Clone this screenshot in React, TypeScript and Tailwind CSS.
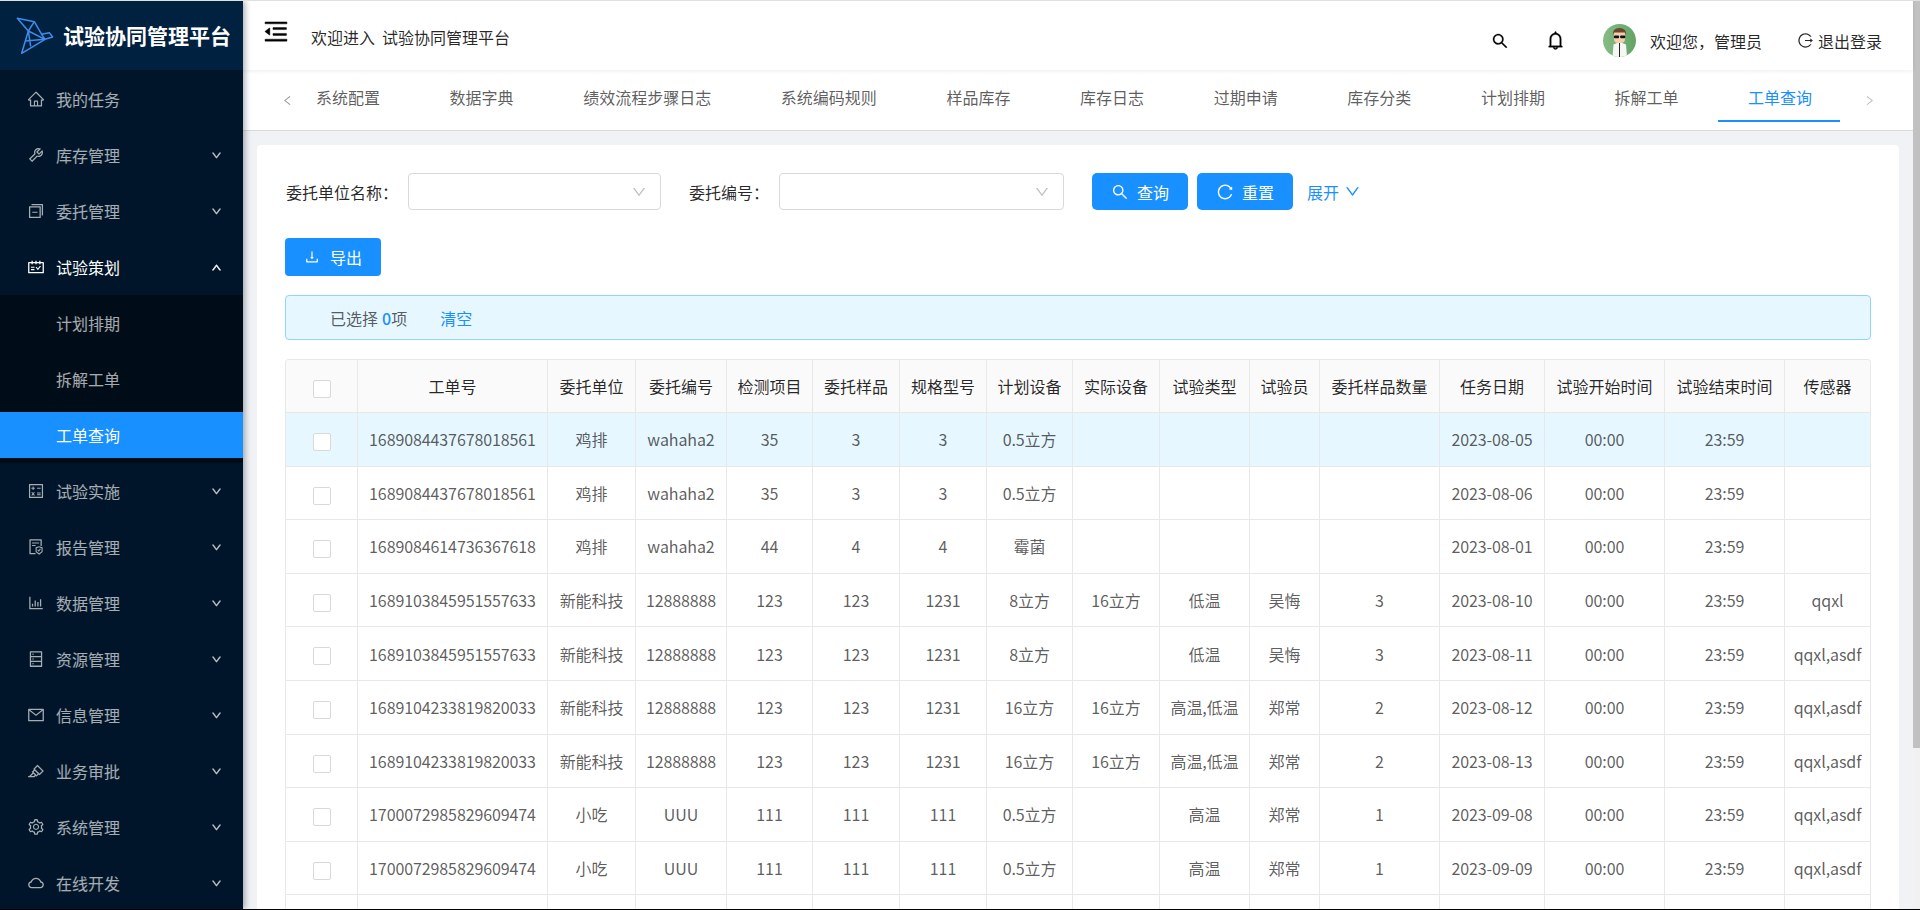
import React from "react";
import {
  AiOutlineHome,
  AiOutlineTool,
  AiOutlineSwitcher,
  AiOutlineSchedule,
  AiOutlineCalculator,
  AiOutlineFileProtect,
  AiOutlineBarChart,
  AiOutlineDatabase,
  AiOutlineMail,
  AiOutlineHighlight,
  AiOutlineSetting,
  AiOutlineCloud,
  AiOutlineSearch,
  AiOutlineBell,
  AiOutlineLogout,
  AiOutlineMenuFold,
  AiOutlineLeft,
  AiOutlineRight,
  AiOutlineDown,
  AiOutlineUp,
  AiOutlineReload,
  AiOutlineDownload,
} from "react-icons/ai";

const menuTop = [
  { label: "我的任务", icon: AiOutlineHome, noArrow: true },
  { label: "库存管理", icon: AiOutlineTool },
  { label: "委托管理", icon: AiOutlineSwitcher },
];

const menuBottom = [
  { label: "试验实施", icon: AiOutlineCalculator },
  { label: "报告管理", icon: AiOutlineFileProtect },
  { label: "数据管理", icon: AiOutlineBarChart },
  { label: "资源管理", icon: AiOutlineDatabase },
  { label: "信息管理", icon: AiOutlineMail },
  { label: "业务审批", icon: AiOutlineHighlight },
  { label: "系统管理", icon: AiOutlineSetting },
  { label: "在线开发", icon: AiOutlineCloud },
];

const tabs = ["系统配置", "数据字典", "绩效流程步骤日志", "系统编码规则", "样品库存", "库存日志", "过期申请", "库存分类", "计划排期", "拆解工单", "工单查询"];

const columns = [
  { title: "工单号", width: "w-[190px]" },
  { title: "委托单位", width: "w-[88px]" },
  { title: "委托编号", width: "w-[91px]" },
  { title: "检测项目", width: "w-[86px]" },
  { title: "委托样品", width: "w-[87px]" },
  { title: "规格型号", width: "w-[87px]" },
  { title: "计划设备", width: "w-[86px]" },
  { title: "实际设备", width: "w-[87px]" },
  { title: "试验类型", width: "w-[90px]" },
  { title: "试验员", width: "w-[70px]" },
  { title: "委托样品数量", width: "w-[120px]" },
  { title: "任务日期", width: "w-[105px]" },
  { title: "试验开始时间", width: "w-[120px]" },
  { title: "试验结束时间", width: "w-[120px]" },
  { title: "传感器", width: "w-[85px]" },
];

const rows = [
  ["1689084437678018561", "鸡排", "wahaha2", "35", "3", "3", "0.5立方", "", "", "", "", "2023-08-05", "00:00", "23:59", ""],
  ["1689084437678018561", "鸡排", "wahaha2", "35", "3", "3", "0.5立方", "", "", "", "", "2023-08-06", "00:00", "23:59", ""],
  ["1689084614736367618", "鸡排", "wahaha2", "44", "4", "4", "霉菌", "", "", "", "", "2023-08-01", "00:00", "23:59", ""],
  ["1689103845951557633", "新能科技", "12888888", "123", "123", "1231", "8立方", "16立方", "低温", "吴悔", "3", "2023-08-10", "00:00", "23:59", "qqxl"],
  ["1689103845951557633", "新能科技", "12888888", "123", "123", "1231", "8立方", "", "低温", "吴悔", "3", "2023-08-11", "00:00", "23:59", "qqxl,asdf"],
  ["1689104233819820033", "新能科技", "12888888", "123", "123", "1231", "16立方", "16立方", "高温,低温", "郑常", "2", "2023-08-12", "00:00", "23:59", "qqxl,asdf"],
  ["1689104233819820033", "新能科技", "12888888", "123", "123", "1231", "16立方", "16立方", "高温,低温", "郑常", "2", "2023-08-13", "00:00", "23:59", "qqxl,asdf"],
  ["1700072985829609474", "小吃", "UUU", "111", "111", "111", "0.5立方", "", "高温", "郑常", "1", "2023-09-08", "00:00", "23:59", "qqxl,asdf"],
  ["1700072985829609474", "小吃", "UUU", "111", "111", "111", "0.5立方", "", "高温", "郑常", "1", "2023-09-09", "00:00", "23:59", "qqxl,asdf"],
  ["", "", "", "", "", "", "", "", "", "", "", "", "", "", ""],
];

const Logo = () => (
  <svg width="38" height="38" viewBox="48 58 114 114" fill="none" stroke="#3f8cec" strokeWidth="4.5" strokeLinejoin="round" className="shrink-0">
    <path d="M52 62 L103 72 L125 110 L148 105 L158 118 L135 125 L65 167 L85 100 Z" />
    <path d="M103 72 L85 100 L135 125 M125 110 L135 125 M85 100 L92 146 M76 130 L135 125" />
  </svg>
);

const Avatar = () => (
  <svg width="33" height="33" viewBox="0 0 33 33" className="shrink-0">
    <defs>
      <linearGradient id="avatar-bg" x1="0" y1="0" x2="1" y2="0">
        <stop offset="0" stopColor="#86bc84" />
        <stop offset="1" stopColor="#62a465" />
      </linearGradient>
      <clipPath id="avatar-clip">
        <circle cx="16.5" cy="16.5" r="16.5" />
      </clipPath>
    </defs>
    <g clipPath="url(#avatar-clip)">
      <rect width="33" height="33" fill="url(#avatar-bg)" />
      <path d="M9.5 33 L10.5 20.5 L16.5 18 L23 20.5 L24 33 Z" fill="#f6f7f5" />
      <rect x="16" y="19" width="1" height="14" fill="#222" />
      <rect x="11" y="6" width="11" height="13" rx="4" fill="#f3cdb0" />
      <path d="M9.8 11 Q9.5 4 16.5 4 Q23.5 4 23.2 11 L22 8.5 L11 8.5 Z" fill="#6b4630" />
      <rect x="11" y="11.5" width="5" height="2.8" rx="0.8" fill="#111" />
      <rect x="17.2" y="11.5" width="5" height="2.8" rx="0.8" fill="#111" />
    </g>
  </svg>
);

const MenuRow = ({ label, Icon, open, noArrow }: { label: string; Icon: React.ComponentType<{ size?: number }>; open?: boolean; noArrow?: boolean }) => (
  <div className={`flex h-[56px] shrink-0 items-center pl-[27px] pr-[21px] ${open ? "text-white" : "text-white/65"}`}>
    <span className="flex w-[18px] justify-center">
      <Icon size={18} />
    </span>
    <span className="ml-[11px] flex-1 text-[16px]">{label}</span>
    {!noArrow && (
      <span className="flex w-[11px] justify-center">
        {open ? <AiOutlineUp size={11} strokeWidth={60} /> : <AiOutlineDown size={11} strokeWidth={60} />}
      </span>
    )}
  </div>
);

const Sidebar = () => (
  <aside className="relative z-10 flex w-[243px] shrink-0 flex-col bg-[#001529] shadow-[2px_0_6px_rgba(0,21,41,0.35)]">
    <div className="flex h-[69px] shrink-0 items-center bg-[#002140] pl-[16px]">
      <Logo />
      <span className="mt-[1px] ml-[9px] text-[21px] font-bold whitespace-nowrap text-white">试验协同管理平台</span>
    </div>
    <div className="h-[1px] shrink-0" />
    {menuTop.map((m) => (
      <MenuRow key={m.label} label={m.label} Icon={m.icon} noArrow={m.noArrow} />
    ))}
    <MenuRow label="试验策划" Icon={AiOutlineSchedule} open />
    <div className="flex h-[168px] shrink-0 flex-col gap-[10px] bg-[#000c17] py-[5px]">
      <div className="flex h-[46px] items-center pl-[56px] text-[16px] text-white/65">计划排期</div>
      <div className="flex h-[46px] items-center pl-[56px] text-[16px] text-white/65">拆解工单</div>
      <div className="flex h-[46px] items-center bg-[#1890ff] pl-[56px] text-[16px] text-white">工单查询</div>
    </div>
    {menuBottom.map((m) => (
      <MenuRow key={m.label} label={m.label} Icon={m.icon} />
    ))}
  </aside>
);

const Header = () => (
  <header className="relative z-[5] flex h-[69px] shrink-0 items-center bg-white shadow-[0_1px_4px_rgba(0,21,41,0.08)]">
    <span className="ml-[19px] flex w-[28px] -translate-y-[4px] justify-center text-black">
      <AiOutlineMenuFold size={29} strokeWidth={16} />
    </span>
    <span className="ml-[21px] translate-y-[1px] text-[16px] text-black/85">
      欢迎进入<span className="ml-[7px]">试验协同管理平台</span>
    </span>
    <div className="ml-auto flex translate-y-[5px] items-center pr-[31px] text-black/85">
      <AiOutlineSearch size={18} strokeWidth={16} className="text-black" />
      <AiOutlineBell size={21} strokeWidth={16} className="ml-[36px] text-black" />
      <span className="ml-[37px]">
        <Avatar />
      </span>
      <span className="ml-[14px] text-[16px]">欢迎您，管理员</span>
      <AiOutlineLogout size={17} className="ml-[35px]" />
      <span className="ml-[4px] text-[16px]">退出登录</span>
    </div>
  </header>
);

const Tabs = () => (
  <div className="flex h-[61px] shrink-0 items-center border-b border-[#d9d9d9] bg-white pl-[38px]">
    <AiOutlineLeft size={13} className="mt-[1px] text-black/40" />
    <div className="ml-[22px] flex gap-[69.6px] pb-[6px]">
      {tabs.map((t, i) => (
        <span key={t} className={`relative text-[16px] whitespace-nowrap ${i === tabs.length - 1 ? "text-[#1890ff]" : "text-black/65"}`}>
          {t}
          {i === tabs.length - 1 && <span className="absolute top-[35px] -right-[28px] -left-[30px] h-[2px] bg-[#1890ff]" />}
        </span>
      ))}
    </div>
    <AiOutlineRight size={13} className="mt-[1px] ml-[51px] text-black/25" />
  </div>
);

const SelectBox = ({ width }: { width: string }) => (
  <div className={`flex h-[37px] items-center justify-end rounded-[4px] border border-[#d9d9d9] bg-white pr-[13px] ${width}`}>
    <AiOutlineDown size={16} className="text-black/25" />
  </div>
);

const Checkbox = () => <span className="inline-block h-[18px] w-[18px] rounded-[2px] border border-[#d9d9d9] bg-white align-middle" />;

const SearchForm = () => (
  <div className="flex h-[37px] items-center">
    <span className="ml-[1px] w-[104px] text-[16px] whitespace-nowrap text-black/85">委托单位名称：</span>
    <div className="ml-[18px]">
      <SelectBox width="w-[253px]" />
    </div>
    <span className="ml-[28px] w-[72px] text-[16px] whitespace-nowrap text-black/85">委托编号：</span>
    <div className="ml-[18px]">
      <SelectBox width="w-[285px]" />
    </div>
    <button className="ml-[28px] flex h-[37px] w-[96px] items-center justify-center gap-[8px] rounded-[5px] bg-[#1890ff] text-[16px] text-white">
      <AiOutlineSearch size={18} />
      查询
    </button>
    <button className="ml-[9px] flex h-[37px] w-[96px] items-center justify-center gap-[8px] rounded-[5px] bg-[#1890ff] text-[16px] text-white">
      <AiOutlineReload size={18} />
      重置
    </button>
    <span className="ml-[14px] flex items-center gap-[5px] text-[16px] text-[#1890ff]">
      展开
      <AiOutlineDown size={17} />
    </span>
  </div>
);

const DataTable = () => (
  <div className="overflow-hidden rounded-t-[4px] border-t border-r border-l border-[#e8e8e8]">
    <table className="w-full table-fixed border-separate border-spacing-0 text-[16px]">
      <thead>
        <tr className="h-[53px] bg-[#fafafa] text-black/85">
          <th className="w-[72px] border-r border-b border-[#e8e8e8] font-normal">
            <Checkbox />
          </th>
          {columns.map((c, i) => (
            <th key={c.title} className={`${c.width} border-b border-[#e8e8e8] font-normal whitespace-nowrap ${i < columns.length - 1 ? "border-r" : ""}`}>
              {c.title}
            </th>
          ))}
        </tr>
      </thead>
      <tbody>
        {rows.map((r, ri) => (
          <tr key={ri} className={`h-[53.6px] tracking-[-0.1px] text-black/65 ${ri === 0 ? "bg-[#e6f7ff]" : "bg-white"}`}>
            <td className="border-r border-b border-[#e8e8e8] text-center">{r[0] && <Checkbox />}</td>
            {r.map((v, ci) => (
              <td key={ci} className={`border-b border-[#e8e8e8] text-center whitespace-nowrap ${ci < r.length - 1 ? "border-r" : ""}`}>
                {v}
              </td>
            ))}
          </tr>
        ))}
      </tbody>
    </table>
  </div>
);

export default function App() {
  return (
    <div className="flex h-[910px] w-[1920px] overflow-hidden border-t border-b border-t-[#e0e0e0] border-b-black font-['Noto_Sans_CJK_SC',sans-serif]">
      <Sidebar />
      <main className="flex min-w-0 flex-1 flex-col bg-[#f0f2f5]">
        <Header />
        <Tabs />
        <div className="flex-1 overflow-hidden pt-[14px] pr-[14px] pl-[14px]">
          <div className="h-full rounded-t-[4px] bg-white px-[28px] pt-[28px]">
            <SearchForm />
            <button className="mt-[28px] flex h-[38px] w-[96px] items-center justify-center gap-[10px] rounded-[4px] bg-[#1890ff] text-[16px] text-white">
              <AiOutlineDownload size={16} />
              导出
            </button>
            <div className="mt-[19px] flex h-[45px] items-center rounded-[4px] border border-[#91d5ff] bg-[#e6f7ff] pl-[44px] text-[16px] text-black/65">
              已选择 <span className="ml-[4px] font-medium text-[#1890ff]">0</span>项
              <span className="ml-[33px] text-[#1890ff]">清空</span>
            </div>
            <div className="mt-[19px]">
              <DataTable />
            </div>
          </div>
        </div>
      </main>
      <div className="w-[7px] shrink-0 bg-[#f1f1f1]">
        <div className="h-[747px] bg-[#c1c1c1]" />
      </div>
    </div>
  );
}
